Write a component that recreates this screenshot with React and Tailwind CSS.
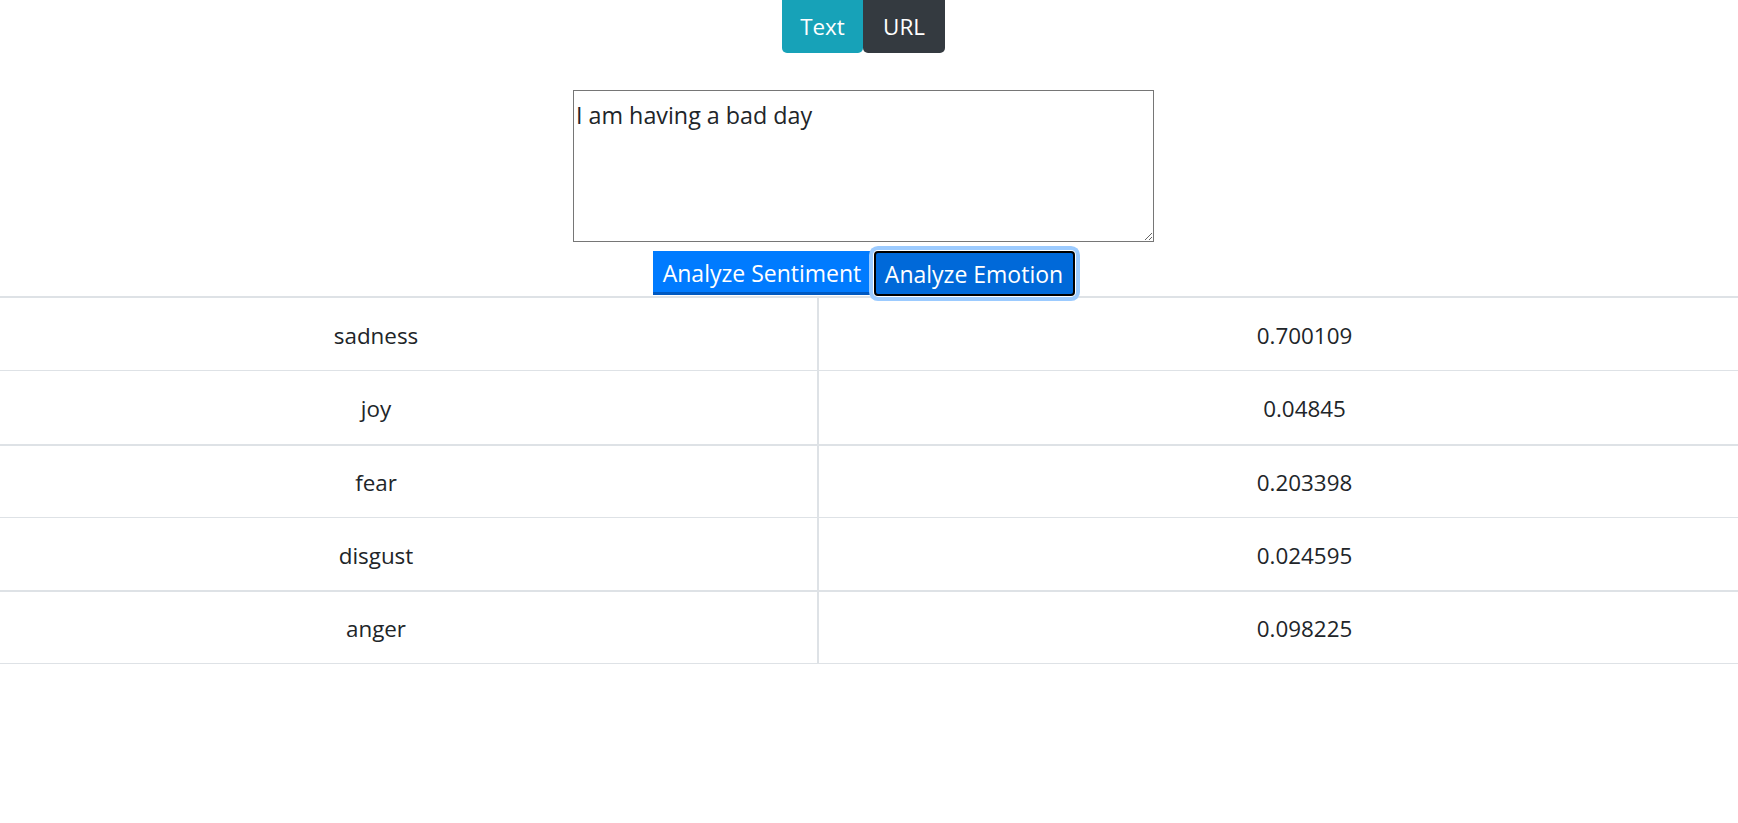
import React, { useState } from 'react';

const results = [
  { label: 'sadness', score: '0.700109' },
  { label: 'joy', score: '0.04845' },
  { label: 'fear', score: '0.203398' },
  { label: 'disgust', score: '0.024595' },
  { label: 'anger', score: '0.098225' }
];

const rowStyles = [
  'h-[74px] border-t-2',
  'h-[74px] border-t',
  'h-[73px] border-t-2',
  'h-[73px] border-t',
  'h-[74px] border-t-2 border-b'
];

const App = () => {
  const [mode, setMode] = useState('text');
  const [input, setInput] = useState('I am having a bad day');

  return (
    <div className="min-h-screen bg-white text-[#212529] text-[22.4px] font-['Open_Sans',sans-serif] overflow-x-hidden">
      <div className="flex justify-center pr-[11px]">
        <button
          type="button"
          onClick={() => setMode('text')}
          className="w-[81px] h-[53px] bg-[#17a2b8] text-white leading-[33.6px] rounded-b-[5px]"
        >
          Text
        </button>
        <button
          type="button"
          onClick={() => setMode('url')}
          className="w-[82px] h-[53px] bg-[#343a40] text-white leading-[33.6px] rounded-b-[5px]"
        >
          URL
        </button>
      </div>

      <div className="flex justify-center pr-[11px] mt-[37px]">
        <textarea
          value={input}
          onChange={(e) => setInput(e.target.value)}
          className="w-[581px] h-[152px] border border-[#767676] pt-[7px] pl-[2px] pr-[2px] text-[23.3px] leading-[34px] text-[#212529] outline-none"
        />
      </div>

      <div className="flex justify-center items-start gap-[2px] pr-[11px] mt-[9px] h-[45px] text-[23px]">
        <button
          type="button"
          className="w-[219px] h-[44px] box-border bg-[#007bff] text-white border-b-[3px] border-[#0059c1] pt-[5px] leading-[33.6px]"
        >
          Analyze Sentiment
        </button>
        <button
          type="button"
          className="w-[201px] h-[45px] box-border bg-[#0069d9] text-white border-2 border-black rounded-[4px] ring-4 ring-[#9ccbff] ring-offset-1 ring-offset-white pt-[2px] leading-[33.6px]"
        >
          Analyze Emotion
        </button>
      </div>

      <div>
        {results.map((r, i) => (
          <div key={r.label} className={`grid grid-cols-[817px_1fr] border-[#dee2e6] ${rowStyles[i]}`}>
            <div className="flex items-center justify-center pr-[65px] pt-[3px]">{r.label}</div>
            <div className="flex items-center justify-center border-l-2 border-[#dee2e6] pl-[52px] pt-[3px]">{r.score}</div>
          </div>
        ))}
      </div>
    </div>
  );
};

export default App;
